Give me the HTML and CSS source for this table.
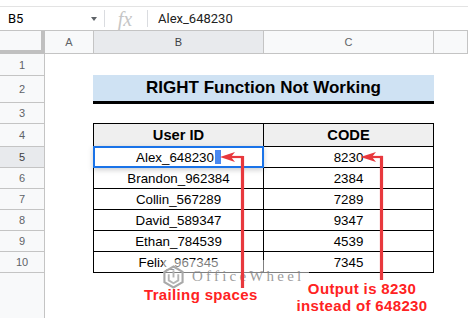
FILE: index.html
```html
<!DOCTYPE html>
<html>
<head>
<meta charset="utf-8">
<link rel="stylesheet" href="styles.css">
</head>
<body>
<div class="app">
  <div class="fbar">
    <div class="namebox"><span class="ref">B5</span><span class="caret"></span></div>
    <div class="sep"></div>
    <div class="fx">fx</div>
    <div class="sep"></div>
    <div class="ftext">Alex_648230</div>
  </div>
  <div class="sheet">
    <div class="corner"></div>
    <div class="ch">A</div>
    <div class="ch sel">B</div>
    <div class="ch">C</div>
    <div class="ch"></div>

    <div class="title">RIGHT Function Not Working</div>

    <div class="tbl">
      <div class="c h">User ID</div><div class="c h">CODE</div>
      <div class="c active">Alex_648230<span class="spaces"></span><div class="selbox"></div></div><div class="c">8230</div>
      <div class="c">Brandon_962384</div><div class="c">2384</div>
      <div class="c">Collin_567289</div><div class="c">7289</div>
      <div class="c">David_589347</div><div class="c">9347</div>
      <div class="c">Ethan_784539</div><div class="c">4539</div>
      <div class="c">Felix_967345</div><div class="c">7345</div>
    </div>

    <div class="rh">1</div>
    <div class="rh">2</div>
    <div class="rh">3</div>
    <div class="rh">4</div>
    <div class="rh sel">5</div>
    <div class="rh">6</div>
    <div class="rh">7</div>
    <div class="rh">8</div>
    <div class="rh">9</div>
    <div class="rh">10</div>
    <div class="rh filler"></div>
  </div>

  <div class="wm">
    <svg class="wm-logo" width="21" height="24" viewBox="0 0 22 25">
      <polygon points="11,1.5 20.5,7 20.5,18 11,23.5 1.5,18 1.5,7" fill="none" stroke="#a9a9a9" stroke-width="2.2"/>
      <polyline points="6,9.5 6,16 11,19 16,16 16,9.5" fill="none" stroke="#b5b5b5" stroke-width="2"/>
      <polyline points="11,5.5 11,13" fill="none" stroke="#b5b5b5" stroke-width="2"/>
    </svg>
    <span class="wm-text">OfficeWheel</span>
  </div>

  <svg class="arrows" width="468" height="318" viewBox="0 0 468 318">
    <line x1="231" y1="157" x2="243" y2="157" stroke="#e8383d" stroke-width="2.2"/>
    <line x1="242.5" y1="155.9" x2="242.5" y2="288" stroke="#e8383d" stroke-width="3.2"/>
    <polygon points="220,157 235,152 231,157 235,162" fill="#e8383d"/>
    <line x1="371" y1="157" x2="382.5" y2="157" stroke="#e8383d" stroke-width="2.2"/>
    <line x1="381.5" y1="155.9" x2="381.5" y2="280" stroke="#e8383d" stroke-width="3.2"/>
    <polygon points="360.5,157 376,152 372,157 376,162" fill="#e8383d"/>
  </svg>

  <div class="note trail">Trailing spaces</div>
  <div class="note out">Output is 8230<br>instead of 648230</div>
</div>
</body>
</html>
```
FILE: styles.css
```css
* { box-sizing: border-box; }
html, body { margin: 0; padding: 0; background: #fff; }

.app {
  position: relative;
  width: 468px;
  height: 318px;
  overflow: hidden;
  display: flex;
  flex-direction: column;
  font-family: Roboto, "Liberation Sans", Arial, sans-serif;
}

/* formula bar */
.fbar {
  margin-top: 6px;
  height: 25px;
  flex: none;
  border-top: 1px solid #e3e3e3;
  border-bottom: 1px solid #c4c4c4;
  display: flex;
  align-items: center;
}
.namebox {
  width: 104px;
  height: 100%;
  display: flex;
  align-items: center;
  justify-content: space-between;
  padding: 0 7px 0 8px;
}
.ref { font-size: 13px; color: #000; }
.caret {
  width: 0; height: 0;
  border-left: 3.5px solid transparent;
  border-right: 3.5px solid transparent;
  border-top: 4px solid #5f6368;
}
.sep { width: 1px; height: 17px; background: #dadce0; }
.fx {
  width: 42px;
  text-align: center;
  font-family: "Liberation Serif", serif;
  font-style: italic;
  font-size: 20px;
  line-height: 20px;
  color: #c6c6c6;
  padding-right: 2px;
}
.ftext { padding-left: 10px; font-size: 13px; color: #222; }

/* sheet grid */
.sheet {
  flex: 1;
  display: grid;
  grid-template-columns: 45px 49px 170px 170px 1fr;
  grid-template-rows: 23px 22px 27px 21px 23px 21px 21px 21px 21px 21px 21px 1fr;
  font-family: "Liberation Sans", Arial, sans-serif;
}
.corner {
  background: #f8f9fa;
  border-right: 4px solid #c0c0c0;
  border-bottom: 4px solid #c0c0c0;
}
.ch {
  background: #f8f9fa;
  border-right: 1px solid #c4c4c4;
  border-bottom: 1px solid #c4c4c4;
  display: flex;
  align-items: center;
  justify-content: center;
  font-size: 11px;
  color: #5f6368;
}
.ch.sel { background: #e8eaed; color: #3c4043; }
.rh {
  grid-column: 1;
  background: #f8f9fa;
  border-right: 1px solid #c4c4c4;
  border-bottom: 1px solid #c4c4c4;
  display: flex;
  align-items: center;
  justify-content: center;
  font-size: 11px;
  color: #5f6368;
}
.rh.sel { background: #e8eaed; color: #3c4043; }
.rh.filler { border-bottom: none; }

.title {
  grid-column: 3 / 5;
  grid-row: 3;
  align-self: start;
  justify-self: start;
  margin: -1px 0 0 -1px;
  width: 341px;
  height: 29px;
  background: #cfe2f3;
  border-bottom: 3px solid #000;
  display: flex;
  align-items: center;
  justify-content: center;
  font-weight: bold;
  font-size: 17px;
  color: #000;
}

.tbl {
  grid-column: 3 / 5;
  grid-row: 5 / 12;
  align-self: start;
  justify-self: start;
  margin: -1px 0 0 -1px;
  width: 341px;
  height: 150px;
  border-top: 1px solid #000;
  border-left: 1px solid #000;
  display: grid;
  grid-template-columns: 170px 170px;
  grid-template-rows: 23px repeat(6, 21px);
}
.c {
  border-right: 1px solid #000;
  border-bottom: 1px solid #000;
  display: flex;
  align-items: center;
  justify-content: center;
  font-size: 13.33px;
  color: #000;
  white-space: nowrap;
}
.c.h { background: #efefef; font-weight: bold; font-size: 14.67px; }
.c.active { position: relative; }
.spaces {
  display: inline-block;
  width: 6px;
  height: 14px;
  margin-left: 1px;
  background: #4a89f0;
}
.selbox {
  position: absolute;
  top: -1px; left: -1px; right: -1px; bottom: -1px;
  border: 2px solid #1a73e8;
  box-shadow: 0 2px 5px rgba(60, 64, 67, 0.25);
}

/* annotations */
.wm {
  position: absolute;
  left: 163px;
  top: 260px;
  width: 146px;
  height: 30px;
  background: rgba(255, 255, 255, 0.5);
  display: flex;
  align-items: flex-start;
  gap: 8px;
}
.wm-logo { flex: none; margin-top: 5px; }
.wm-text {
  margin-top: 9px;
  font-family: "Liberation Serif", serif;
  font-size: 15px;
  line-height: 15px;
  letter-spacing: 3.2px;
  color: rgba(130, 130, 130, 0.8);
}
.arrows { position: absolute; left: 0; top: 0; }
.note {
  position: absolute;
  color: #ff2222;
  font-family: "Liberation Sans", Arial, sans-serif;
  font-weight: bold;
  font-size: 15px;
  line-height: 17px;
  letter-spacing: 0.35px;
  white-space: nowrap;
}
.note.trail { left: 144px; top: 286px; }
.note.out { left: 294px; top: 280px; width: 136px; text-align: center; }
```
